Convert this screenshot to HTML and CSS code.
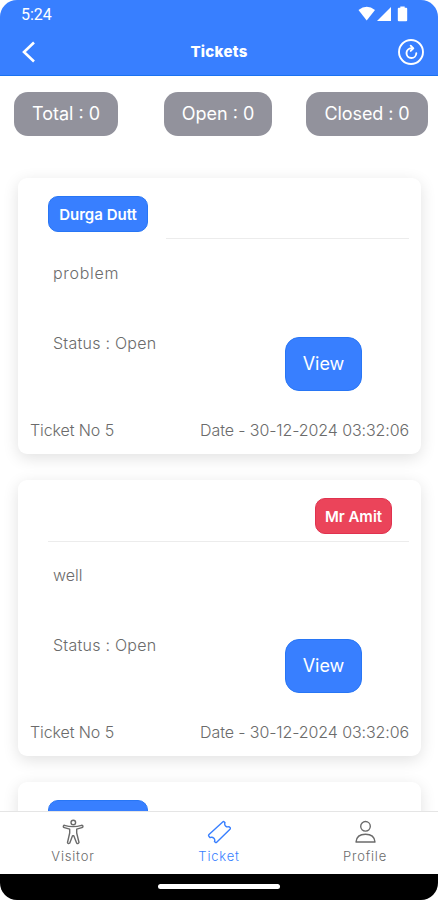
FILE: index.html
```html
<!DOCTYPE html>
<html lang="en">
<head>
<meta charset="utf-8">
<meta name="viewport" content="width=device-width, initial-scale=1">
<title>Tickets</title>
<link rel="stylesheet" href="styles.css">
</head>
<body>
<div class="phone">
  <header class="header">
    <div class="status">
      <span class="clock">5:24</span>
      <svg class="signals" width="50" height="16" viewBox="0 0 50 16" fill="#fff">
        <path d="M0.500 4Q8.700-2.500 17 4L8.700 14.500Z"/>
        <path d="M19 15H33V1Z"/>
        <path d="M42.300 0.500h4.400v1.300h1.500q1 0 1 1v11.400q0 1-1 1h-7.400q-1 0-1-1V2.800q0-1 1-1h1.500Z"/>
      </svg>
    </div>
    <div class="toolbar">
      <svg class="back" width="16" height="22" viewBox="0 0 16 22" fill="none" stroke="#fff" stroke-width="2.600"><path d="M13 1.500 3 11l10 9.500"/></svg>
      <h1 class="title">Tickets</h1>
      <svg class="refresh" width="28" height="28" viewBox="0 0 28 28" fill="none" stroke="#fff" stroke-width="1.900" stroke-linecap="round" stroke-linejoin="round"><circle cx="14" cy="14" r="12"/><path d="M15.500 10.200H14.500A4.900 4.900 0 1 0 19.300 15.200"/><path d="M13.700 7.700 16.300 10.300 13.700 12.900"/></svg>
    </div>
  </header>
  <main class="content">
    <div class="counts">
      <div class="count total"><span>Total : 0</span></div>
      <div class="count open"><span>Open : 0</span></div>
      <div class="count closed"><span>Closed : 0</span></div>
    </div>
    <article class="card">
      <div class="who"><span class="badge resident">Durga Dutt</span><i class="rule"></i></div>
      <p class="message wide">problem</p>
      <div class="state"><span class="state-text">Status : Open</span><button class="view">View</button></div>
      <footer class="meta"><span class="number">Ticket No 5</span><span class="date">Date - 30-12-2024 03:32:06</span></footer>
    </article>
    <article class="card">
      <div class="who staff"><span class="badge guard">Mr Amit</span></div>
      <p class="message">well</p>
      <div class="state"><span class="state-text">Status : Open</span><button class="view">View</button></div>
      <footer class="meta"><span class="number">Ticket No 5</span><span class="date">Date - 30-12-2024 03:32:06</span></footer>
    </article>
    <article class="card">
      <div class="who"><span class="badge resident"></span><i class="rule"></i></div>
    </article>
  </main>
  <nav class="tabs">
    <a class="tab">
      <svg width="24" height="26" viewBox="0 0 24 26" fill="none" stroke="currentColor" stroke-width="1.400" stroke-linejoin="round"><circle cx="12.300" cy="3.500" r="2.300"/><path d="M3.500 6.300Q12 9 20.500 6.300Q22.600 6.500 21.700 8.300L15.700 10.200V14L18 23.500Q17 25.500 15.600 24L12.800 16.800H11.500L8.800 24Q7 25.500 6.500 23.500L8.700 14V10.200L2.500 8.300Q1.800 6.600 3.500 6.300Z"/></svg>
      <span>Visitor</span>
    </a>
    <a class="tab active">
      <svg width="24" height="26" viewBox="0 0 24 26" fill="none" stroke="currentColor" stroke-width="1.400" stroke-linejoin="round"><path d="M2 15.400 15.700 2.900Q16.500 2.200 17.300 3L18 3.800Q17.200 5.600 18.500 6.900T21.600 7.800Q22.100 7.500 22.500 8L23.200 8.800Q23.800 9.500 23 10.200L9.700 23.200Q9 23.900 8.300 23.200L7.500 22.400Q8.300 20.700 6.900 19.300T3.600 18.400Q3.100 18.700 2.700 18.200L1.900 17.200Q1.200 16.200 2 15.400Z"/></svg>
      <span>Ticket</span>
    </a>
    <a class="tab">
      <svg width="24" height="26" viewBox="0 0 24 26" fill="none" stroke="currentColor" stroke-width="1.400" stroke-linejoin="round"><circle cx="12.500" cy="7.300" r="4.800"/><path d="M3 23C3.500 17.300 7.500 15.300 12.500 15.300S21.500 17.300 22 23Z"/></svg>
      <span>Profile</span>
    </a>
  </nav>
  <div class="homebar"><i></i></div>
</div>
</body>
</html>
```
FILE: styles.css
```css
* { box-sizing: border-box; }
body { margin: 0; background: #fff; }
.phone {
  display: flex; flex-direction: column;
  width: 438px; height: 900px; overflow: hidden;
  border-radius: 17px; background: #fff; color: #6b6b6b;
  font-family: Inter, "Liberation Sans", sans-serif;
  font-weight: 300; font-size: 16px;
}
.phone span { white-space: nowrap; }
.header { flex: none; height: 76px; background: #387fff; border-bottom: 1px solid #1a72f0; color: #fff; }
.status { display: flex; justify-content: space-between; height: 28px; padding: 6px 30px 0 21px; }
.clock { font: 400 16px/18px Roboto, sans-serif; }
.toolbar { display: flex; align-items: center; justify-content: space-between; height: 48px; padding: 0 13px 0 21px; }
.title { margin: 0 0 0 4px; font-size: 15px; font-weight: 800; line-height: 20px; letter-spacing: .3px; }
.content { flex: 1; min-height: 0; overflow: hidden; }
.counts { display: flex; justify-content: space-between; padding: 16px 10px 0 14px; height: 102px; }
.count { display: flex; align-items: center; justify-content: center; height: 44px; padding-bottom: 2px; border-radius: 14px; background: #92929c; color: #fff; font-size: 18px; font-weight: 400; }
.total { width: 104px; }
.open { width: 108px; margin-right: -12px; }
.closed { width: 122px; letter-spacing: -.1px; }
.card { width: 403px; height: 276px; margin: 0 0 26px 18px; padding-top: 18px; border-radius: 9px; background: #fff; box-shadow: 0 4px 16px rgba(0,0,0,.12); }
.who { display: flex; height: 43px; padding: 0 12px 0 30px; }
.badge { display: flex; align-items: center; justify-content: center; height: 36px; border-radius: 10px; color: #fff; font-size: 15px; font-weight: 600; }
.resident { width: 100px; background: #387fff; border: 1px solid #2876f5; }
.rule { flex: 1; height: 43px; margin-left: 18px; border-bottom: 1px solid #ececec; }
.staff { width: 361px; height: 44px; margin-left: 30px; padding: 0 17px 0 0; justify-content: flex-end; border-bottom: 1px solid #ececec; }
.guard { width: 77px; background: #eb445a; border: 1px solid #e0324f; }
.message { height: 24px; margin: 22px 0 0 35px; line-height: 24px; }
.wide { letter-spacing: .7px; }
.staff + .message { margin-top: 21px; }
.state { display: flex; justify-content: space-between; height: 54px; margin: 52px 59px 0 35px; line-height: 12px; }
.state-text { letter-spacing: .24px; }
.view { width: 77px; height: 54px; padding: 0; border: 1px solid #2876f5; border-radius: 14px; background: #387fff; color: #fff; font: 400 18px/24px Inter, sans-serif; }
.meta { display: flex; justify-content: space-between; margin: 27px 12px 0; line-height: 24px; }
.number, .date { letter-spacing: -.1px; }
.tabs { display: grid; grid-template-columns: repeat(3, 1fr); flex: none; height: 63px; padding-top: 7px; border-top: 1px solid #e5e5e5; background: #fff; }
.tab { display: flex; flex-direction: column; align-items: center; font-size: 13px; line-height: 22px; letter-spacing: .8px; }
.tab svg { flex: none; }
.active { color: #387fff; }
.homebar { display: flex; justify-content: center; flex: none; height: 26px; padding-top: 10px; background: #000; }
.homebar i { width: 122px; height: 5px; border-radius: 3px; background: #fff; }
```
